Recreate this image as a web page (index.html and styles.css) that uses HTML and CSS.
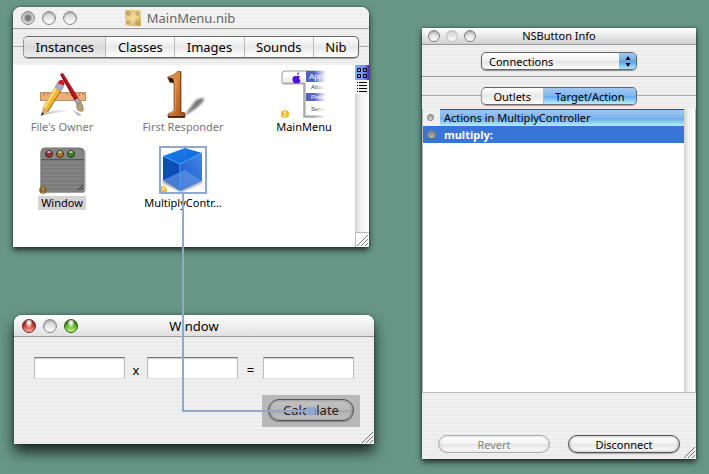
FILE: index.html
```html
<!DOCTYPE html>
<html lang="en">
<head>
  <meta charset="UTF-8">
  <title>Interface Builder</title>
  <link rel="stylesheet" href="styles.css">
</head>
<body>

  <main class="desktop">
    <div class="left">

      <!-- Nib window -->
      <section class="window nib">
        <header class="titlebar">
          <div class="lights">
            <button class="light dot" aria-label="Close"></button>
            <button class="light" aria-label="Minimize"></button>
            <button class="light" aria-label="Zoom"></button>
          </div>
          <h1 class="title muted">
            <svg width="16" height="16" viewBox="0 0 16 16">
              <defs>
                <linearGradient id="gold" x1="0" y1="0" x2="1" y2="1">
                  <stop offset="0" stop-color="#dbb666"/>
                  <stop offset=".5" stop-color="#f0dc96"/>
                  <stop offset="1" stop-color="#c99c50"/>
                </linearGradient>
              </defs>
              <rect width="16" height="16" fill="url(#gold)"/>
              <g fill="#d8c49a" stroke="#a88550">
                <circle cx="3.5" cy="3.5" r="1.6"/><circle cx="12.5" cy="3.5" r="1.6"/>
                <circle cx="3.5" cy="12.5" r="1.6"/><circle cx="12.5" cy="12.5" r="1.6"/>
              </g>
            </svg>
            MainMenu.nib
          </h1>
        </header>

        <div class="tab-row">
          <nav class="tabs">
            <button class="tab current">Instances</button>
            <button class="tab">Classes</button>
            <button class="tab">Images</button>
            <button class="tab">Sounds</button>
            <button class="tab">Nib</button>
          </nav>
        </div>

        <div class="nib-body">
          <div class="icons">
            <div class="item dim">
              <svg width="48" height="48" viewBox="0 0 48 48">
                <defs>
                  <linearGradient id="soft" x1="0" y1="0" x2="1" y2="0">
                    <stop offset="0" stop-color="#777" stop-opacity=".6"/>
                    <stop offset="1" stop-color="#999" stop-opacity="0"/>
                  </linearGradient>
                </defs>
                <path d="M4 45Q18 38 33 41Q22 42 4 45Z" fill="url(#soft)"/>
                <path d="M35 40l9 5-4 1z" fill="#bbb"/>
                <rect x="2.5" y="22.500" width="45" height="8" fill="#e8b07c" stroke="#c58d62"/>
                <path d="M6 23v3m4-3v2m4-2v3m15-3v2m4-2v3m4-3v2m4-2v3m4-3v2" stroke="#a56f44"/>
                <path d="M22 4l3-1 18 29-4 3z" fill="#b5161f"/>
                <path d="M23 5l16 28" stroke="#79070d"/>
                <path d="M36.500 30l4-2 2.500 5-4 2z" fill="#a5a8ac"/>
                <path d="M39 34l4-2q3 5 2 9-3 1-5-1-2-2-1-6z" fill="#b7a078" stroke="#8c785a" stroke-width=".7"/>
                <path d="M17 17l6 4-13 21-6 3 1-8z" fill="#f2b72d"/>
                <path d="M18.500 18L6.500 38" stroke="#ffe58a" stroke-width="1.500"/>
                <path d="M22.500 21L9.500 42" stroke="#9a6315"/>
                <path d="M5 37l5 4-6.500 5z" fill="#d9a678"/>
                <path d="M4 42l2 2-3 2z" fill="#222"/>
                <path d="M17 17l2.500-4 6 4-2.500 4z" fill="#a5aacb" stroke="#7b7fa0" stroke-width=".6"/>
                <path d="M19.500 13q2-4 5-3 3 1 1.500 6z" fill="#cf202a"/>
              </svg>
              <span class="label">File's Owner</span>
            </div>
            <div class="item dim">
              <svg width="48" height="48" viewBox="0 0 48 48">
                <defs>
                  <linearGradient id="copper" x1="0" y1="0" x2="1" y2="1">
                    <stop offset="0" stop-color="#e8a05a"/>
                    <stop offset=".5" stop-color="#cf7a35"/>
                    <stop offset="1" stop-color="#a55218"/>
                  </linearGradient>
                  <filter id="blur"><feGaussianBlur stdDeviation="1.300"/></filter>
                </defs>
                <path d="M25 46L37 30q9-4 8 0-4 7-20 16z" fill="#333" opacity=".65" filter="url(#blur)"/>
                <path d="M8.500 7q6-1 10-5.500l3.500 0L22 42l4 1v4H9v-3l6-3V13l-4-.5z" fill="url(#copper)" stroke="#7d3d10" stroke-width=".7"/>
                <path d="M9 7.500l5 1 1 4-4-.5z" fill="#241207"/>
                <path d="M17 9l-1 32-5 3" fill="none" stroke="#f0b276" opacity=".6"/>
                <path d="M21.500 2v40l4 2" fill="none" stroke="#8d430f"/>
                <path d="M9 47h17" stroke="#261004" stroke-width="1.500"/>
              </svg>
              <span class="label">First Responder</span>
            </div>
            <div class="item">
              <svg width="48" height="48" viewBox="1 0 48 48">
                <defs>
                  <linearGradient id="fade" x1="0" y1="0" x2="1" y2="0">
                    <stop offset=".35" stop-color="#fff" stop-opacity="0"/>
                    <stop offset=".9" stop-color="#fff"/>
                  </linearGradient>
                </defs>
                <path d="M25 14v33h23" fill="none" stroke="#bbb" stroke-width="2"/>
                <path d="M48 1H6q-3 0-3 3v9h23v33h22z" fill="#fff" stroke="#999"/>
                <path d="M4 8h22v5H4z" fill="#eee"/>
                <path d="M4 13.500h22" stroke="#aaa" stroke-width="2"/>
                <rect x="27" y="1" width="21" height="11" fill="#5361c0"/>
                <rect x="27" y="23" width="21" height="8" fill="#5361c0"/>
                <path d="M18 5q0-2 2-3 0 3-2 3zm-.5 1.200q1-1 3.500-.2-2 2.500.5 4.500-1 3-2.500 3l-1.500-.4-1.500.4q-2.500-1-2.500-4.500 0-3.500 4-2.800z" fill="#4a11e0"/>
                <g font-size="6" font-family="Liberation Sans, sans-serif">
                  <text x="30" y="9" fill="#fff" font-size="8">App</text>
                  <text x="32" y="19" fill="#333">Abou</text>
                  <text x="32" y="29" fill="#fff">Prefe</text>
                  <text x="32" y="41" fill="#333">Servi</text>
                </g>
                <rect x="27" width="22" height="48" fill="url(#fade)"/>
                <circle cx="6" cy="44" r="4" fill="#f2b63c"/>
                <path d="M6 41v3.500m0 1v1.500" stroke="#fff" stroke-width="1.600"/>
              </svg>
              <span class="label">MainMenu</span>
            </div>
            <div class="item">
              <svg width="48" height="48" viewBox="0 0 48 48">
                <defs>
                  <pattern id="lines" width="4" height="4" patternUnits="userSpaceOnUse">
                    <rect width="4" height="4" fill="#7b7b7b"/><rect width="4" height="2" fill="#838383"/>
                  </pattern>
                </defs>
                <rect x="2" y="3" width="46" height="44" rx="4" fill="#ccc"/>
                <path d="M3 46V6q0-4 4-4h35q4 0 4 4v40z" fill="url(#lines)" stroke="#777"/>
                <path d="M3.500 13V6q0-3 4-3h34q4 0 4 3v7z" fill="#858585"/>
                <path d="M3 13.500h43" stroke="#555"/>
                <g stroke="#333">
                  <circle cx="11" cy="8" r="3.500" fill="#a52c25"/>
                  <circle cx="22" cy="8" r="3.500" fill="#b47721"/>
                  <circle cx="33" cy="8" r="3.500" fill="#38851f"/>
                </g>
                <path d="M9.500 6h3m8 0h3m8 0h3" stroke="#ddd" stroke-width="1.500"/>
                <path d="M40 44l5-5m-2 5l2-2" stroke="#333"/>
                <circle cx="5" cy="44" r="3.800" fill="#876625"/>
                <path d="M5 41.500v3m0 1v1.500" stroke="#aaa" stroke-width="1.400"/>
              </svg>
              <span class="label selected">Window</span>
            </div>
            <div class="item">
              <svg width="48" height="48" viewBox="0 0 48 48">
                <defs>
                  <linearGradient id="cubeTop" x1="0" y1="0" x2="1" y2="1">
                    <stop offset="0" stop-color="#1c83ea"/><stop offset="1" stop-color="#0d62d8"/>
                  </linearGradient>
                  <linearGradient id="cubeRight" x1="1" y1="0" x2="0" y2="1">
                    <stop offset="0" stop-color="#4189e8"/><stop offset="1" stop-color="#1853c4"/>
                  </linearGradient>
                </defs>
                <rect width="48" height="48" fill="#fff"/>
                <path d="M4 33l17 11 22-9 0 2-21 9-18-9z" fill="#555" opacity=".6" filter="url(#blur)"/>
                <path d="M4 10l17 8v27L4 34z" fill="#0c4eb4"/>
                <path d="M4 10L26 2l17 5-22 11z" fill="url(#cubeTop)"/>
                <path d="M21 18L43 7v28L21 45z" fill="url(#cubeRight)"/>
                <path d="M4 34l22-10 17 11-22 10z" fill="#6596e5" opacity=".65"/>
                <path d="M26 2v22" stroke="#2c77dd"/>
                <path d="M4 10l17 8L43 7M21 18v27" fill="none" stroke="#38a2ff"/>
                <path d="M2 40h3q3 1 3 6H2z" fill="#f2b63c"/>
                <path d="M4.500 41v3" stroke="#fff" stroke-width="1.500"/>
                <rect x="1" y="1" width="46" height="46" fill="none" stroke="#8fa8cf" stroke-width="2"/>
              </svg>
              <span class="label">MultiplyContr...</span>
            </div>
          </div>

          <div class="rail">
            <button class="view on" aria-label="Icon view">
              <svg width="10" height="10" viewBox="0 0 10 10" fill="none" stroke="#000"><path d="M.5.5h3v3h-3zM6.500.5h3v3h-3zM.5 6.500h3v3h-3zM6.500 6.500h3v3h-3z"/></svg>
            </button>
            <button class="view" aria-label="List view">
              <svg width="10" height="10" viewBox="0 0 10 10" stroke="#000"><path d="M0 .5h1m1 0h8M0 3.500h1m1 0h8M0 6.500h1m1 0h8M0 9.500h1m1 0h8"/></svg>
            </button>
            <div class="track"></div>
            <div class="corner">
              <svg width="11" height="11" viewBox="0 0 11 11" stroke="#777"><path d="M0 11L11 0M4 11l7-7M8 11l3-3"/></svg>
            </div>
          </div>
        </div>
      </section>

      <!-- Window being designed -->
      <section class="window app">
        <header class="titlebar">
          <div class="lights">
            <button class="light red" aria-label="Close"></button>
            <button class="light" aria-label="Minimize"></button>
            <button class="light green" aria-label="Zoom"></button>
          </div>
          <h2 class="title">Window</h2>
        </header>
        <div class="form">
          <div class="fields">
            <input class="field" type="text" aria-label="First number">
            <span class="sign">x</span>
            <input class="field" type="text" aria-label="Second number">
            <span class="sign wide">=</span>
            <input class="field" type="text" aria-label="Result">
          </div>
          <div class="target">
            <button class="pill calculate">Calculate</button>
          </div>
        </div>
        <svg class="grip" width="11" height="11" viewBox="0 0 11 11" stroke="#777"><path d="M0 11L11 0M4 11l7-7M8 11l3-3"/></svg>
      </section>

      <!-- Connection from the button to the controller -->
      <div class="wire"></div>
    </div>

    <!-- Info panel -->
    <section class="window info">
      <header class="titlebar small">
        <div class="lights">
          <button class="light" aria-label="Close"></button>
          <button class="light faint" aria-label="Minimize"></button>
          <button class="light" aria-label="Zoom"></button>
        </div>
        <h2 class="title">NSButton Info</h2>
      </header>
      <div class="popup-row">
        <div class="popup">
          <select aria-label="Inspector pane">
            <option>Connections</option>
          </select>
          <span class="arrows">
            <svg width="6" height="11" viewBox="0 0 6 11"><path d="M3 0l2.500 4h-5zM3 11L.5 7h5z"/></svg>
          </span>
        </div>
      </div>
      <div class="tab-row small">
        <nav class="tabs">
          <button class="tab">Outlets</button>
          <button class="tab blue">Target/Action</button>
        </nav>
      </div>
      <div class="list">
        <div class="list-main">
          <table>
            <thead>
              <tr><th class="mark"><i class="ring"></i></th><th class="heading">Actions in MultiplyController</th></tr>
            </thead>
            <tbody>
              <tr><td class="mark"><i class="ring big"></i></td><td>multiply:</td></tr>
            </tbody>
          </table>
        </div>
        <div class="scroll"></div>
      </div>
      <footer class="actions">
        <button class="pill" disabled>Revert</button>
        <button class="pill">Disconnect</button>
      </footer>
      <svg class="grip" width="11" height="11" viewBox="0 0 11 11" stroke="#777"><path d="M0 11L11 0M4 11l7-7M8 11l3-3"/></svg>
    </section>
  </main>

</body>
</html>
```
FILE: styles.css
```css
* {
  box-sizing: border-box;
}

body {
  margin: 0;
  min-height: 100vh;
  background: #679686;
  font-family: 'Lucida Grande', 'Noto Sans', sans-serif;
  font-size: 11px;
  color: #000;
}

button, input, select {
  margin: 0;
  padding: 0;
  border: none;
  font: inherit;
  color: inherit;
}

svg {
  display: block;
  flex: none;
}

.desktop {
  display: grid;
  grid-template-columns: minmax(0, 361fr) minmax(0, 274fr);
  align-items: start;
  gap: 48px;
  padding: 7px 13px 14px;
}

.left {
  position: relative;
  display: flex;
  flex-direction: column;
  gap: 68px;
}

/* Windows */
.window {
  position: relative;
  border-radius: 8px 8px 0 0;
  background: repeating-linear-gradient(#f0f0f0 0 2px, #ebebeb 2px 4px);
  box-shadow: 0 3px 6px rgba(0,0,0,0.7), 0 0 2px rgba(0,0,0,0.5);
}

.nib {
  margin-right: 5px;
}

.app {
  margin-left: 1px;
  box-shadow: 0 8px 14px rgba(0,0,0,0.75), 0 0 3px rgba(0,0,0,0.4);
}

.info {
  margin-top: 21px;
  border-radius: 0;
}

.titlebar {
  display: grid;
  grid-template-columns: 1fr auto 1fr;
  align-items: center;
  height: 22px;
  padding: 0 8px;
  border-bottom: 1px solid #999;
  border-radius: 8px 8px 0 0;
  background: linear-gradient(#fff, #e0e0e0);
}

.nib .titlebar {
  padding-right: 30px;
  background: repeating-linear-gradient(#f4f4f4 0 2px, #efefef 2px 4px);
}

.titlebar.small {
  height: 17px;
  padding: 0 6px;
  border-radius: 0;
  background: linear-gradient(#fff, #d0d0d0);
}

.lights {
  display: flex;
  gap: 7px;
}

.light {
  width: 14px;
  height: 14px;
  border: 1px solid #888;
  border-radius: 50%;
  background: linear-gradient(#d0d0d0, #fff);
  box-shadow: inset 0 1px 2px rgba(0,0,0,0.3);
}

.light.dot {
  background: radial-gradient(#777 0 2px, #e0e0e0 5px);
}

.light.red {
  border-color: #6d2525;
  background: radial-gradient(ellipse at 50% 15%, #fff 0 1px, transparent 4px), linear-gradient(#8c1515, #d33d3d 50%, #ffb5ae);
}

.light.green {
  border-color: #2c5d17;
  background: radial-gradient(ellipse at 50% 15%, #fff 0 1px, transparent 4px), linear-gradient(#255f0d, #62b528 50%, #cbff85);
}

.small .lights {
  gap: 6px;
}

.small .light {
  width: 12px;
  height: 12px;
}

.small .faint {
  border-color: #bbb;
  box-shadow: none;
}

.title {
  display: flex;
  align-items: center;
  gap: 6px;
  margin: 0;
  font-size: 13px;
  line-height: 16px;
  font-weight: normal;
  white-space: nowrap;
}

.title.muted {
  color: #666;
}

.small .title {
  font-size: 11px;
}

/* Tabs */
.tab-row {
  display: flex;
  align-items: center;
  height: 36px;
}

.tab-row::before,
.tab-row::after {
  content: "";
  flex: 0 0 10px;
  height: 2px;
  border-top: 1px solid #aaa;
}

.tabs {
  flex: 1;
  display: flex;
  height: 22px;
  border: 1px solid #666;
  border-left-color: #999;
  border-radius: 5px;
  background: linear-gradient(#fff, #e8e8e8 50%, #fff);
  box-shadow: 0 1px 1px rgba(0,0,0,0.3);
  overflow: hidden;
}

.tab {
  flex: 1 1 auto;
  border-right: 1px solid #bbb;
  background: none;
  font-size: 13px;
  white-space: nowrap;
}

.tab:last-child {
  border-right: none;
}

.tab.current {
  background: linear-gradient(#eee, #d8d8d8 50%, #eee);
}

.tab-row.small {
  height: 32px;
  padding-top: 6px;
}

.tab-row.small::before,
.tab-row.small::after {
  flex: 1;
}

.small .tabs {
  flex: 0 0 156px;
  height: 18px;
}

.small .tab {
  font-size: 11px;
}

.tab.blue {
  background: linear-gradient(#a0c8f2, #82b6ee 50%, #65a8ec 52%, #b5f0ff);
}

/* Nib contents */
.nib-body {
  display: flex;
  height: 182px;
  background: #fff;
}

.icons {
  flex: 1;
  display: grid;
  grid-template-columns: 98fr 144fr 98fr;
  grid-auto-rows: 76px;
  padding: 5px 2px 0 0;
}

.item {
  display: flex;
  flex-direction: column;
  align-items: center;
  gap: 2px;
}

.label {
  padding: 0 3px;
  line-height: 14px;
  white-space: nowrap;
}

.dim {
  color: #777;
}

.selected {
  background: #d4d4d4;
}

.rail {
  flex: 0 0 14px;
  display: flex;
  flex-direction: column;
}

.view {
  display: flex;
  align-items: center;
  justify-content: center;
  height: 14px;
  background: #f2f2f2;
}

.view.on {
  height: 15px;
  background: linear-gradient(90deg, #7fb2f0, #7a86e8 70%, #5a1ec8);
}

.track, .scroll {
  flex: 1;
  background: linear-gradient(90deg, #d0d0d0, #f2f2f2 40%, #fff);
}

.corner {
  display: flex;
  align-items: flex-end;
  justify-content: flex-end;
  height: 15px;
  padding: 1px;
  border-top: 1px solid #bbb;
  border-left: 1px solid #bbb;
}

/* Designed window */
.form {
  padding: 20px 14px 17px 20px;
}

.fields {
  display: flex;
  align-items: center;
  padding-right: 6px;
}

.field {
  flex: 1;
  min-width: 0;
  height: 22px;
  border: 1px solid #bbb;
  border-top: 1px solid #777;
  border-bottom-color: #ddd;
  background: #fff;
  box-shadow: inset 0 1px 1px #ccc;
}

.sign {
  width: 22px;
  font-size: 13px;
  line-height: 18px;
  padding-top: 4px;
  text-align: center;
}

.sign.wide {
  width: 25px;
}

.target {
  width: 98px;
  margin: 16px 0 0 auto;
  padding: 4px 6px 6px;
  background: #b8b8b8;
}

.pill {
  flex: 1;
  height: 18px;
  border: 1px solid #555;
  border-radius: 10px;
  background: linear-gradient(#fff, #f3f3f3 48%, #e4e4e4 52%, #fff);
  box-shadow: inset 0 0 3px rgba(0,0,0,0.4), 0 1px 1px rgba(0,0,0,0.3);
}

.pill:disabled {
  border-color: #aaa;
  color: #888;
  box-shadow: inset 0 0 3px rgba(0,0,0,0.2);
}

.calculate {
  display: block;
  width: 100%;
  height: 22px;
  border-radius: 11px;
  background: linear-gradient(#c4c4c4, #b8b8b8 48%, #a9a9a9 52%, #c8c8c8);
  font-size: 13px;
  color: #222;
}

.grip {
  position: absolute;
  right: 1px;
  bottom: 1px;
}

/* Runs down from the cube icon, then across to the button */
.wire {
  position: absolute;
  left: 169px;
  right: 59px;
  top: 186px;
  bottom: 32px;
  border-left: 2px solid #8fa8cf;
  border-bottom: 2px solid #8fa8cf;
}

.wire::after {
  content: "";
  position: absolute;
  right: 0;
  bottom: -5px;
  width: 9px;
  height: 8px;
  background: #8fa8cf;
}

/* Info panel */
.popup-row {
  display: flex;
  justify-content: center;
  padding: 7px 0 6px;
  border-bottom: 1px solid #999;
}

.popup {
  display: flex;
  position: relative;
  width: 156px;
  height: 18px;
  border: 1px solid #666;
  border-radius: 5px;
  background: linear-gradient(#fff, #f0f0f0 50%, #e4e4e4 52%, #fff);
  box-shadow: 0 1px 1px rgba(0,0,0,0.4);
  overflow: hidden;
}

.popup select {
  flex: 1;
  appearance: none;
  padding-left: 7px;
  background: none;
}

.arrows {
  position: absolute;
  top: 0;
  right: 0;
  bottom: 0;
  width: 17px;
  display: flex;
  align-items: center;
  justify-content: center;
  background: linear-gradient(#a0c8f2, #6fa9ea 50%, #5a9fe8 52%, #a8e8ff);
  pointer-events: none;
}

.list {
  display: flex;
  height: 284px;
  border: 1px solid #bbb;
  border-top: none;
  background: #fff;
}

.list-main {
  flex: 1;
}

table {
  width: 100%;
  border-collapse: collapse;
}

th, td {
  height: 17px;
  padding: 0 0 0 4px;
  line-height: 16px;
  text-align: left;
  white-space: nowrap;
}

th {
  font-weight: normal;
  background: #f0f0f0;
}

.heading {
  background: linear-gradient(#a0c8f2, #82b6ee 50%, #65a8ec 52%, #b5f0ff);
  box-shadow: inset 0 1px #1d4fb0;
}

td {
  background: #3875d7;
  font-weight: bold;
  color: #fff;
}

.mark {
  width: 17px;
}

.ring {
  display: block;
  width: 7px;
  height: 7px;
  border: 1px solid #777;
  border-radius: 50%;
  background: linear-gradient(#999, #ddd);
}

.ring.big {
  width: 9px;
  height: 9px;
  background: linear-gradient(#777, #bbb);
}

.scroll {
  flex: 0 0 11px;
}

.actions {
  display: flex;
  gap: 18px;
  padding: 42px 16px 6px;
}
```
